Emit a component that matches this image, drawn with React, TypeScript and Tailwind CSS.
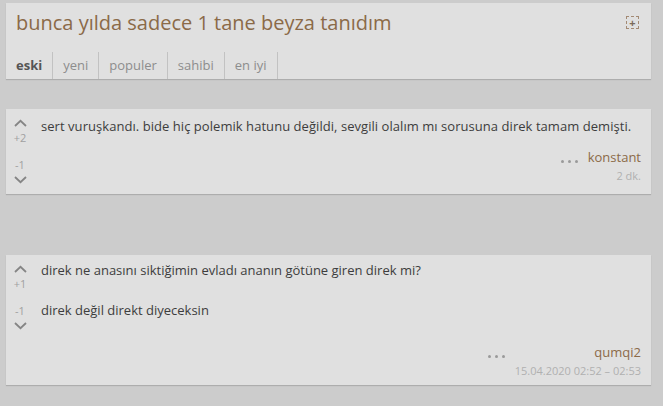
import React from "react";

const Up = () => (
  <svg width="13" height="8" viewBox="0 0 13 8" className="block">
    <path d="M1 7 L6.5 1.8 L12 7" fill="none" stroke="#858585" strokeWidth="1.8" />
  </svg>
);
const Down = () => (
  <svg width="13" height="8" viewBox="0 0 13 8" className="block">
    <path d="M1 1 L6.5 6.2 L12 1" fill="none" stroke="#858585" strokeWidth="1.8" />
  </svg>
);

const Dots = () => (
  <span className="flex gap-[4px] items-center">
    <span className="w-[3px] h-[3px] rounded-full bg-[#9a9a9a]" />
    <span className="w-[3px] h-[3px] rounded-full bg-[#9a9a9a]" />
    <span className="w-[3px] h-[3px] rounded-full bg-[#9a9a9a]" />
  </span>
);

export default function App() {
  const tabs = ["eski", "yeni", "populer", "sahibi", "en iyi"];
  return (
    <div
      className="w-[663px] h-[406px] bg-[#cccccc] overflow-hidden pt-[3px] pl-[6px] pr-[12px]"
      style={{ fontFamily: '"Open Sans", sans-serif' }}
    >
      {/* header */}
      <div className="bg-[#e0e0e0] shadow-[0_1px_1px_rgba(0,0,0,0.15)] h-[76px] flex flex-col">
        <div className="flex items-start justify-between pl-[10px] pr-[12px] pt-[7px]">
          <h1 className="text-[20px] leading-[26px] text-[#8b6a48]">
            bunca yılda sadece 1 tane beyza tanıdım
          </h1>
          <div className="mt-[6px] w-[13px] h-[13px] border border-dashed border-[#a38a74] flex items-center justify-center">
            <span className="text-[11px] leading-none text-[#7a6a5a] font-bold">+</span>
          </div>
        </div>
        <div className="flex mt-auto h-[27px] items-center text-[13px] text-[#8d8d8d]">
          {tabs.map((t, i) => (
            <div
              key={t}
              className={
                "h-full flex items-center px-[10px] border-r border-[#c2c2c2] " +
                (i === 0 ? "font-bold text-[#555]" : "")
              }
            >
              {t}
            </div>
          ))}
        </div>
      </div>

      {/* entry 1 */}
      <div className="mt-[30px] bg-[#e0e0e0] shadow-[0_1px_1px_rgba(0,0,0,0.15)] h-[85px] flex text-[13px]">
        <div className="w-[28px] flex flex-col items-center pt-[10px] text-[11px] text-[#a0a0a0] leading-[14px]">
          <Up />
          <span className="mt-[4px]">+2</span>
          <span className="mt-[13px]">-1</span>
          <span className="mt-[4px]"><Down /></span>
        </div>
        <div className="flex-1 flex flex-col pl-[7px] pr-[10px]">
          <p className="pt-[8px] text-[#3d3d3d] leading-[18px] tracking-[0.05px]">
            sert vuruşkandı. bide hiç polemik hatunu değildi, sevgili olalım mı sorusuna direk tamam demişti.
          </p>
          <div className="flex justify-end items-start mt-[13px]">
            <div className="mt-[12px] mr-[10px]"><Dots /></div>
            <div className="flex flex-col items-end">
              <span className="text-[#8b6a48] leading-[18px]">konstant</span>
              <span className="text-[11px] text-[#b0b0b0] leading-[18px] mt-[1px]">2 dk.</span>
            </div>
          </div>
        </div>
      </div>

      {/* entry 2 */}
      <div className="mt-[61px] bg-[#e0e0e0] shadow-[0_1px_1px_rgba(0,0,0,0.15)] h-[130px] flex text-[13px]">
        <div className="w-[28px] flex flex-col items-center pt-[10px] text-[11px] text-[#a0a0a0] leading-[14px]">
          <Up />
          <span className="mt-[4px]">+1</span>
          <span className="mt-[13px]">-1</span>
          <span className="mt-[4px]"><Down /></span>
        </div>
        <div className="flex-1 flex flex-col pl-[7px] pr-[10px]">
          <p className="pt-[6px] text-[#3d3d3d] leading-[18px]">
            direk ne anasını siktiğimin evladı ananın götüne giren direk mi?
          </p>
          <p className="mt-[22px] text-[#3d3d3d] leading-[18px]">direk değil direkt diyeceksin</p>
          <div className="flex justify-end items-start mt-[24px]">
            <div className="mt-[12px] mr-[10px]"><Dots /></div>
            <div className="flex flex-col items-end">
              <span className="text-[#8b6a48] leading-[18px]">qumqi2</span>
              <span className="text-[11px] text-[#b0b0b0] leading-[18px] mt-[1px]">15.04.2020 02:52 – 02:53</span>
            </div>
          </div>
        </div>
      </div>
    </div>
  );
}
